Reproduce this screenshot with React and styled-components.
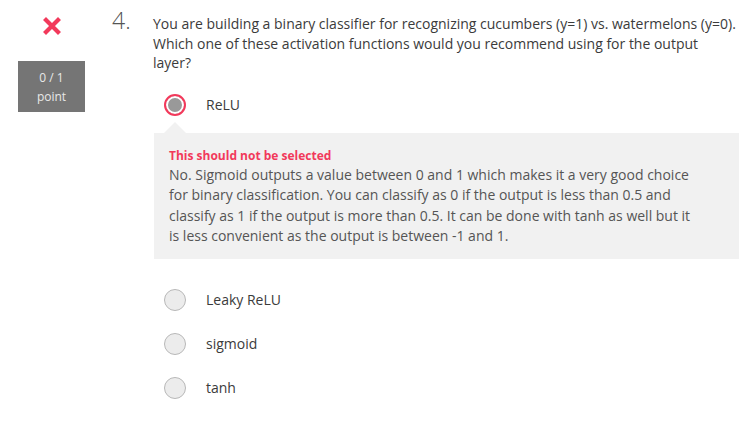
import styled, { createGlobalStyle } from "styled-components";

const GlobalStyle = createGlobalStyle`
  body {
    margin: 0;
    background: #fff;
    font-family: "Open Sans", "Liberation Sans", sans-serif;
  }
`;

const options = [
  { label: "ReLU", selected: true },
  { label: "Leaky ReLU" },
  { label: "sigmoid" },
  { label: "tanh" },
];

const CrossIcon = () => (
  <svg width="18" height="18" viewBox="0 0 18 18">
    <path d="M3 3 L15 15 M15 3 L3 15" stroke="#f2395b" strokeWidth="4.2" strokeLinecap="square" />
  </svg>
);

export default function App() {
  return (
    <>
      <GlobalStyle />
      <Page>
        <Side>
          <CrossIcon />
          <Score>
            <span>0 / 1</span>
            <span>point</span>
          </Score>
        </Side>
        <Number>4.</Number>
        <Body>
          <Question>
            You are building a binary classifier for recognizing cucumbers (y=1) vs. watermelons (y=0).
            Which one of these activation functions would you recommend using for the output layer?
          </Question>
          <Options>
            {options.map((o) => (
              <div key={o.label}>
                <Option $selected={o.selected}>
                  <Radio $selected={o.selected} />
                  <Label>{o.label}</Label>
                </Option>
                {o.selected && (
                  <Feedback>
                    <FeedbackTitle>This should not be selected</FeedbackTitle>
                    <FeedbackText>
                      No. Sigmoid outputs a value between 0 and 1 which makes it a very good choice
                      for binary classification. You can classify as 0 if the output is less than 0.5 and
                      classify as 1 if the output is more than 0.5. It can be done with tanh as well but it
                      is less convenient as the output is between -1 and 1.
                    </FeedbackText>
                  </Feedback>
                )}
              </div>
            ))}
          </Options>
        </Body>
      </Page>
    </>
  );
}

const Page = styled.div`
  display: flex;
  align-items: flex-start;
  width: 749px;
  height: 428px;
  box-sizing: border-box;
`;

const Side = styled.div`
  display: flex;
  flex-direction: column;
  align-items: center;
  width: 67px;
  margin-left: 18px;
  padding-top: 17px;
  gap: 26px;
`;

const Score = styled.div`
  width: 67px;
  height: 51px;
  background: #757575;
  color: #e8e8e8;
  font-size: 12px;
  line-height: 19px;
  display: flex;
  flex-direction: column;
  align-items: center;
  justify-content: center;
`;

const Number = styled.div`
  width: 41px;
  margin-left: 27px;
  padding-top: 6px;
  font-size: 23px;
  font-weight: 300;
  line-height: 28px;
  color: #555;
`;

const Body = styled.div`
  flex: 1;
  padding-top: 14px;
  padding-right: 10px;
`;

const Question = styled.div`
  font-size: 14px;
  line-height: 19.5px;
  color: #3b3b3b;
`;

const Options = styled.div`
  display: flex;
  flex-direction: column;
  margin-top: 10px;
`;

const Option = styled.div`
  display: flex;
  align-items: center;
  height: 44px;
  padding-left: 11px;
`;

const Radio = styled.span`
  box-sizing: border-box;
  width: 22px;
  height: 22px;
  border-radius: 50%;
  flex-shrink: 0;
  ${(p) =>
    p.$selected
      ? `
    border: 2px solid #f2395b;
    background: #fff;
    box-shadow: inset 0 0 0 2px #fff, inset 0 0 0 9px #999;
  `
      : `
    border: 1px solid #b8b8b8;
    background: #ececec;
  `}
`;

const Label = styled.span`
  margin-left: 20px;
  font-size: 14px;
  color: #3b3b3b;
`;

const Feedback = styled.div`
  position: relative;
  margin: 6px 0 19px 1px;
  background: #f1f1f1;
  padding: 15px 15px 12px 15px;

  &::before {
    content: "";
    position: absolute;
    top: -11px;
    left: 10px;
    border-left: 11px solid transparent;
    border-right: 11px solid transparent;
    border-bottom: 11px solid #f1f1f1;
  }
`;

const FeedbackTitle = styled.div`
  font-size: 12px;
  font-weight: 700;
  color: #f2395b;
  line-height: 16px;
  margin-bottom: 1px;
`;

const FeedbackText = styled.div`
  max-width: 530px;
  font-size: 14px;
  line-height: 20.5px;
  color: #555;
`;
